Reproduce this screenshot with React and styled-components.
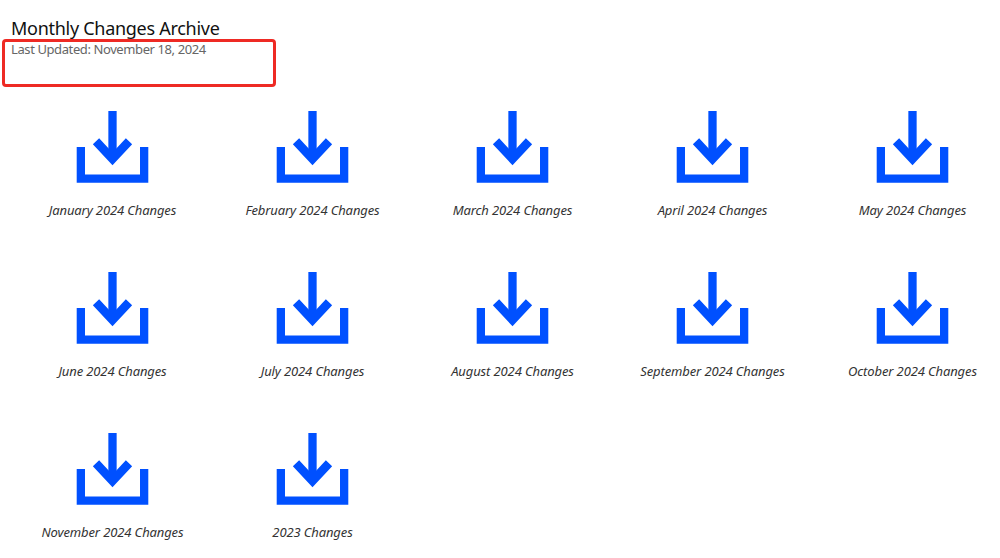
import React from 'react';
import styled, { createGlobalStyle } from 'styled-components';

const GlobalStyle = createGlobalStyle`
  html, body {
    margin: 0;
    padding: 0;
    background: #fff;
  }
  body {
    font-family: 'Noto Sans', 'Open Sans', sans-serif;
  }
`;

const Page = styled.div`
  position: relative;
  width: 1000px;
  height: 558px;
  overflow: hidden;
  padding: 16px 0 0 11px;
  box-sizing: border-box;
`;

const Title = styled.h1`
  margin: 0;
  font-size: 18px;
  line-height: 24px;
  font-weight: 400;
  color: #111;
  letter-spacing: -0.28px;
`;

const Updated = styled.div`
  font-size: 13px;
  line-height: 17px;
  margin-top: 1px;
  color: #666;
  letter-spacing: -0.4px;
`;

const Highlight = styled.div`
  position: absolute;
  left: 2px;
  top: 39px;
  width: 274px;
  height: 48px;
  box-sizing: border-box;
  border: 3px solid #ee2a24;
  border-radius: 4px;
`;

const Grid = styled.div`
  display: grid;
  grid-template-columns: repeat(5, 200px);
  grid-auto-rows: 161px;
  margin: 53px 0 0 1.5px;
`;

const Item = styled.a`
  display: flex;
  flex-direction: column;
  align-items: center;
  color: #333;
  text-decoration: none;
`;

const Caption = styled.span`
  margin-top: 17px;
  font-size: 13px;
  line-height: 18px;
  font-style: italic;
  white-space: nowrap;
  letter-spacing: -0.12px;
`;

const DownloadIcon = () => (
  <svg width="73" height="73" viewBox="0 0 73 73" fill="none" stroke="#0050ff" strokeWidth="8.3">
    <path d="M4.85 36V67.55H68.15V36" />
    <path d="M36.5 0V46" />
    <path d="M20 30.3L36.5 48L53 30.3" strokeWidth="8.6" />
  </svg>
);

const files = [
  'January 2024 Changes',
  'February 2024 Changes',
  'March 2024 Changes',
  'April 2024 Changes',
  'May 2024 Changes',
  'June 2024 Changes',
  'July 2024 Changes',
  'August 2024 Changes',
  'September 2024 Changes',
  'October 2024 Changes',
  'November 2024 Changes',
  '2023 Changes',
];

export default function App() {
  return (
    <Page>
      <GlobalStyle />
      <Title>Monthly Changes Archive</Title>
      <Updated>Last Updated: November 18, 2024</Updated>
      <Highlight />
      <Grid>
        {files.map((name) => (
          <Item key={name} href="#">
            <DownloadIcon />
            <Caption>{name}</Caption>
          </Item>
        ))}
      </Grid>
    </Page>
  );
}
